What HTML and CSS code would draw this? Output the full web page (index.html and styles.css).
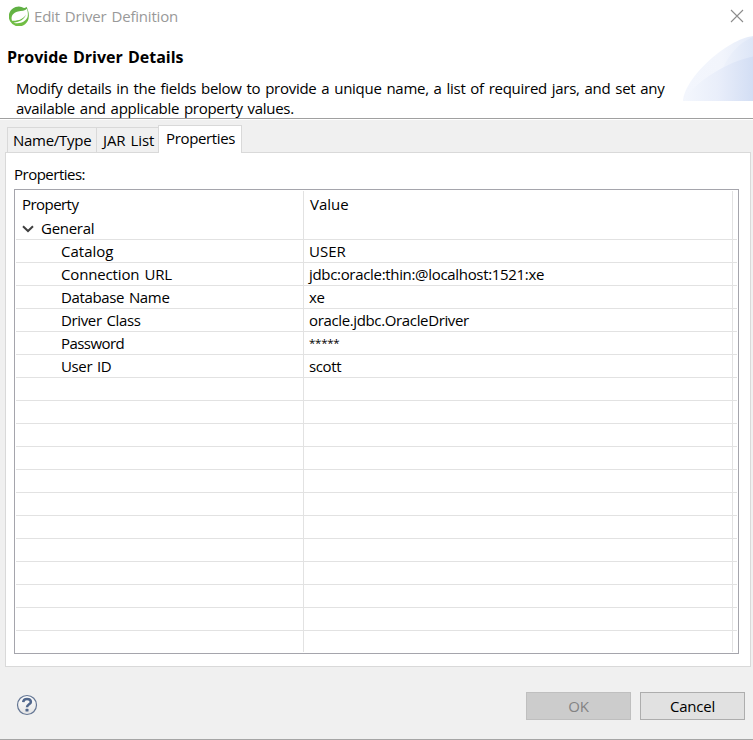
FILE: index.html
```
<!DOCTYPE html>
<html lang="en">
<head>
<meta charset="utf-8">
<title>Edit Driver Definition</title>
<link rel="stylesheet" href="styles.css">
</head>
<body>
<div class="dialog">
  <header class="banner">
    <div class="titlebar">
      <svg class="logo" width="20" height="20" viewBox="0 0 20 20">
        <defs><linearGradient id="leaf" x1="0" y1="0" x2="0" y2="1"><stop offset="0" stop-color="#5dae43"/><stop offset="1" stop-color="#74c044"/></linearGradient></defs>
        <path fill="url(#leaf)" d="M17.600 .8C18.800 3.500 20.200 7.300 19.800 10.600A10 10 0 1 1 15 1.900C16.300 2 17 1.500 17.600 .8Z"/>
        <path fill="#fff" d="M18 2.800C16 5 12.500 4.800 9 5.600C4.200 6.700 1.500 10.300 3 14.800C9 15.200 14.500 13.200 17 8.600C15.300 13.500 11 16 4.500 16.700C11 18.400 16.800 15.700 18.600 11C19.300 8.300 18.700 5.300 18 2.800Z"/>
      </svg>
      <span class="window-title">Edit Driver Definition</span>
      <svg class="close" width="14" height="14" viewBox="0 0 14 14"><path d="M1 1L13 13M13 1L1 13" stroke="#8c8c8c" stroke-width="1.1"/></svg>
    </div>
    <h1 class="heading">Provide Driver Details</h1>
    <p class="intro">Modify details in the fields below to provide a unique name, a list of required jars, and set any<br>available and applicable property values.</p>
    <svg class="swoosh" width="70" height="66" viewBox="0 0 70 66">
      <defs>
        <linearGradient id="s1"><stop offset="0" stop-color="#f3f6fd"/><stop offset=".55" stop-color="#f2f5fc"/><stop offset="1" stop-color="#e4ebf9"/></linearGradient>
        <linearGradient id="s2"><stop offset="0" stop-color="#f4f7fd"/><stop offset=".5" stop-color="#e9eefa"/><stop offset="1" stop-color="#d3def4"/></linearGradient>
        <linearGradient id="s3"><stop offset="0" stop-color="#eef2fb"/><stop offset="1" stop-color="#dde6f7"/></linearGradient>
      </defs>
      <path fill="url(#s1)" d="M0 66C1 43 44 4 70 1V66Z"/>
      <path fill="url(#s3)" d="M40 33C46 19 57 7 70 2V66H40Z"/>
      <path fill="url(#s2)" d="M0 66C12 47 43 27 70 21.500V66Z"/>
    </svg>
  </header>
  <main class="content">
    <nav class="tabs">
      <span class="tab tab-name">Name/Type</span>
      <span class="tab tab-jar">JAR List</span>
      <span class="tab tab-active">Properties</span>
    </nav>
    <section class="panel">
      <div class="label">Properties:</div>
      <div class="table">
        <div class="row head"><span class="cell tight">Property</span><span class="cell value wide">Value</span></div>
        <div class="row group"><span class="cell"><svg class="chevron" width="12" height="8" viewBox="0 0 12 8"><path d="M1 1.200L6 6L11 1.200" fill="none" stroke="#404040" stroke-width="2"/></svg>General</span></div>
        <div class="row item"><span class="cell wide">Catalog</span><span class="cell value wide">USER</span></div>
        <div class="row item"><span class="cell medium">Connection URL</span><span class="cell value url">jdbc:oracle:thin:@localhost:1521:xe</span></div>
        <div class="row item"><span class="cell snug">Database Name</span><span class="cell value">xe</span></div>
        <div class="row item"><span class="cell snug">Driver Class</span><span class="cell value snug">oracle.jdbc.OracleDriver</span></div>
        <div class="row item"><span class="cell tight">Password</span><span class="cell value stars">*****</span></div>
        <div class="row item"><span class="cell snug">User ID</span><span class="cell value snug">scott</span></div>
        <div class="row"></div><div class="row"></div><div class="row"></div><div class="row"></div>
        <div class="row"></div><div class="row"></div><div class="row"></div><div class="row"></div>
        <div class="row"></div><div class="row"></div><div class="row"></div><div class="row last"></div>
        <i class="rule rule-mid"></i><i class="rule rule-end"></i>
      </div>
    </section>
    <footer class="footer">
      <svg class="help" width="22" height="22" viewBox="0 0 22 22">
        <defs><linearGradient id="h" x1="0" y1="0" x2="0" y2="1"><stop offset="0" stop-color="#fff"/><stop offset="1" stop-color="#e4e4e4"/></linearGradient></defs>
        <circle cx="11" cy="11" r="9.500" fill="url(#h)" stroke="#647694" stroke-width="1.200"/>
        <path d="M7.200 8.100C7.400 5.700 9 4.900 11 4.900C13.600 4.900 14.900 6.100 14.900 7.900C14.900 10.400 11 10.300 11 13.300" fill="none" stroke="#51678c" stroke-width="2.500"/>
        <rect x="9.500" y="14.800" width="3" height="2.700" rx=".6" fill="#51678c"/>
      </svg>
      <button class="btn ok" disabled>OK</button>
      <button class="btn cancel">Cancel</button>
    </footer>
  </main>
</div>
</body>
</html>
```
FILE: styles.css
```
* { box-sizing: border-box; }
body { margin: 0; background: #fff; color: #000; font: 15px/20px "Open Sans", "Noto Sans", sans-serif; letter-spacing: -.27px; word-spacing: 1.3px; }
.dialog { width: 753px; height: 740px; display: flex; flex-direction: column; background: #f0f0f0; border-bottom: 1px solid #a5a5a5; overflow: hidden; white-space: nowrap; }
.banner { position: relative; height: 119px; flex: none; background: #fff; border-bottom: 1px solid #a0a0a0; }
.titlebar { display: flex; align-items: center; height: 32px; padding: 0 10px 0 9px; }
.logo { margin-right: 5px; }
.window-title { color: #999; letter-spacing: -.2px; }
.close { margin-left: auto; margin-right: -1px; }
.heading { margin: 15px 0 0 7px; font-size: 16px; line-height: 20px; font-weight: 700; letter-spacing: 0; word-spacing: 1px; }
.intro { margin: 11px 0 0 16px; line-height: 20px; word-spacing: 1.2px; }
.swoosh { position: absolute; right: 0; top: 35px; }
.content { flex: 1; padding: 0 2px 0 5px; border-top: 1px solid #fff; display: flex; flex-direction: column; }
.tabs { display: flex; height: 32px; padding: 5px 0 0 2px; align-items: flex-end; }
.tab { height: 25px; padding: 2px 0 0 5px; border: 1px solid #d9d9d9; border-bottom: 0; border-right: 0; }
.tab-name { width: 89px; }
.tab-jar { width: 62px; padding-left: 6px; letter-spacing: -.1px; }
.tab-active { position: relative; width: 84px; height: 28px; margin-bottom: -1px; padding-left: 7px; background: #fff; border-right: 1px solid #d9d9d9; letter-spacing: -.35px; }
.panel { width: 746px; height: 515px; background: #fff; border: 1px solid #d9d9d9; padding: 11px 0 0 8px; }
.label { height: 25px; letter-spacing: -.5px; }
.table { position: relative; width: 725px; height: 465px; border: 1px solid #a5a5ac; padding: 1px; }
.row { display: flex; height: 23px; border-bottom: 1px solid #e2e2e2; line-height: 22px; }
.row.last { border: 0; }
.cell { width: 288px; flex: none; padding-left: 6px; }
.tight { letter-spacing: -.55px; }
.snug { letter-spacing: -.36px; }
.url { letter-spacing: -.32px; }
.medium { letter-spacing: -.15px; }
.wide { letter-spacing: 0; }
.head { height: 26px; border: 0; line-height: 26px; }
.head .cell.value { padding-left: 6px; }
.item .cell { padding-left: 45px; }
.item .cell.value { padding-left: 5px; }
.item .stars { font-size: 11.5px; line-height: 21px; }
.chevron { margin-right: 7px; vertical-align: 1px; }
.rule { position: absolute; top: 1px; bottom: 1px; width: 1px; background: #e2e2e2; }
.rule-mid { left: 288px; }
.rule-end { right: 5px; }
.footer { display: flex; align-items: center; flex: 1; padding: 5px 6px 0 11px; }
.help { margin-top: -2px; }
.btn { width: 105px; height: 28px; padding: 1px 0 0; font: inherit; letter-spacing: -.2px; text-align: center; border: 1px solid #adadad; background: #e1e1e1; color: #000; }
.ok { margin-left: auto; margin-right: 9px; background: #ccc; border-color: #bfbfbf; color: #838383; }
```
